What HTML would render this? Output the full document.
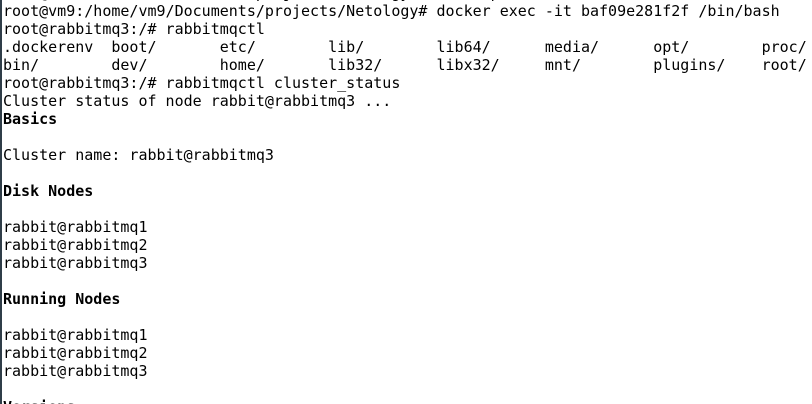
<!DOCTYPE html>
<html><head><meta charset="utf-8"><style>
html,body{margin:0;padding:0;background:#fff;width:812px;height:404px;overflow:hidden;position:relative}
.b{position:absolute;left:0;top:0;width:2px;height:404px;background:#2f3d48}
pre{position:absolute;left:3px;top:-16px;margin:0;font-family:"DejaVu Sans Mono","Liberation Mono",monospace;font-size:15px;line-height:18px;color:#000}
b{font-weight:bold}
</style></head><body><div class="b"></div><pre>root@vm9:/home/vm/Documents/projects/Netology# docker ps
root@vm9:/home/vm9/Documents/projects/Netology# docker exec -it baf09e281f2f /bin/bash
root@rabbitmq3:/# rabbitmqctl
.dockerenv  boot/       etc/        lib/        lib64/      media/      opt/        proc/
bin/        dev/        home/       lib32/      libx32/     mnt/        plugins/    root/
root@rabbitmq3:/# rabbitmqctl cluster_status
Cluster status of node rabbit@rabbitmq3 ...
<b>Basics</b>

Cluster name: rabbit@rabbitmq3

<b>Disk Nodes</b>

rabbit@rabbitmq1
rabbit@rabbitmq2
rabbit@rabbitmq3

<b>Running Nodes</b>

rabbit@rabbitmq1
rabbit@rabbitmq2
rabbit@rabbitmq3

<b>Versions</b></pre></body></html>
